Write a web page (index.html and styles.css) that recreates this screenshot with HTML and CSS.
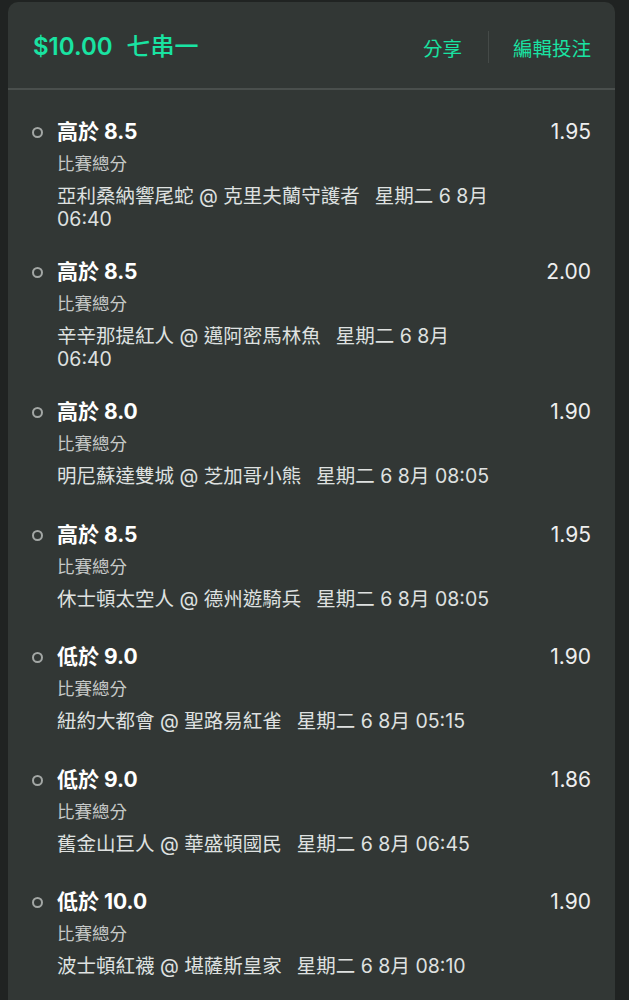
FILE: index.html
```html
<!DOCTYPE html>
<html>
<head>
    <meta charset="utf-8">
    <title>投注單</title>
    <link rel="stylesheet" href="styles.css">
</head>
<body>
<div class="slip">
    <div class="slip-header">
        <div class="slip-title">
            <span>$10.00</span>
            <span class="bet-type">七串一</span>
        </div>
        <div class="slip-actions">
            <a class="action" href="#">分享</a>
            <span class="sep"></span>
            <a class="action" href="#">編輯投注</a>
        </div>
    </div>

    <ul class="legs">
        <li class="leg">
            <span class="dot"></span>
            <div class="leg-info">
                <div class="pick">高於 8.5</div>
                <div class="market">比賽總分</div>
                <div class="match">亞利桑納響尾蛇 @ 克里夫蘭守護者<span class="when">星期二 6 8月<br>06:40</span></div>
            </div>
            <div class="odds">1.95</div>
        </li>
        <li class="leg">
            <span class="dot"></span>
            <div class="leg-info">
                <div class="pick">高於 8.5</div>
                <div class="market">比賽總分</div>
                <div class="match">辛辛那提紅人 @ 邁阿密馬林魚<span class="when">星期二 6 8月<br>06:40</span></div>
            </div>
            <div class="odds">2.00</div>
        </li>
        <li class="leg">
            <span class="dot"></span>
            <div class="leg-info">
                <div class="pick">高於 8.0</div>
                <div class="market">比賽總分</div>
                <div class="match">明尼蘇達雙城 @ 芝加哥小熊<span class="when">星期二 6 8月 08:05</span></div>
            </div>
            <div class="odds">1.90</div>
        </li>
        <li class="leg">
            <span class="dot"></span>
            <div class="leg-info">
                <div class="pick">高於 8.5</div>
                <div class="market">比賽總分</div>
                <div class="match">休士頓太空人 @ 德州遊騎兵<span class="when">星期二 6 8月 08:05</span></div>
            </div>
            <div class="odds">1.95</div>
        </li>
        <li class="leg">
            <span class="dot"></span>
            <div class="leg-info">
                <div class="pick">低於 9.0</div>
                <div class="market">比賽總分</div>
                <div class="match">紐約大都會 @ 聖路易紅雀<span class="when">星期二 6 8月 05:15</span></div>
            </div>
            <div class="odds">1.90</div>
        </li>
        <li class="leg">
            <span class="dot"></span>
            <div class="leg-info">
                <div class="pick">低於 9.0</div>
                <div class="market">比賽總分</div>
                <div class="match">舊金山巨人 @ 華盛頓國民<span class="when">星期二 6 8月 06:45</span></div>
            </div>
            <div class="odds">1.86</div>
        </li>
        <li class="leg">
            <span class="dot"></span>
            <div class="leg-info">
                <div class="pick">低於 10.0</div>
                <div class="market">比賽總分</div>
                <div class="match">波士頓紅襪 @ 堪薩斯皇家<span class="when">星期二 6 8月 08:10</span></div>
            </div>
            <div class="odds">1.90</div>
        </li>
    </ul>
</div>
</body>
</html>
```

FILE: styles.css
```css
* {
	box-sizing: border-box;
}

body {
	margin: 0;
	background-color: #202322;
	font-family: Inter, "Noto Sans CJK TC", sans-serif;
	color: #e2e4e3;
}

.slip {
	margin: 2px 14px 0 8px;
	min-height: 1000px;
	background-color: #323735;
	border-radius: 10px 10px 0 0;
}

/* header */

.slip-header {
	display: flex;
	align-items: center;
	justify-content: space-between;
	height: 88px;
	padding: 4px 24px 0 25px;
	border-bottom: 2px solid #4a4f4d;
}

.slip-title {
	display: flex;
	align-items: baseline;
	gap: 14px;
	font-size: 24px;
	line-height: 30px;
	font-weight: 600;
	color: #19e3a2;
}

.bet-type {
	font-weight: 500;
}

.slip-actions {
	display: flex;
	align-items: center;
}

.action {
	font-size: 19.5px;
	color: #19e3a2;
	text-decoration: none;
}

.sep {
	width: 1px;
	height: 32px;
	margin: 0 24px 0 26px;
	background-color: #454a48;
}

/* legs */

.legs {
	list-style: none;
	margin: 0;
	padding: 15px 0 0 0;
}

.leg {
	display: flex;
	align-items: flex-start;
	min-height: 122.5px;
	padding: 14px 24px 14px 24px;
}

.dot {
	flex: none;
	width: 11px;
	height: 11px;
	margin: 8px 14px 0 0;
	border: 2px solid #a3a7a5;
	border-radius: 50%;
}

.leg-info {
	flex: 1;
}

.pick {
	font-size: 21px;
	line-height: 26px;
	font-weight: 700;
	color: #ffffff;
}

.market {
	margin-top: 8px;
	font-size: 17.5px;
	line-height: 22px;
	color: #c6c9c8;
}

.match {
	margin-top: 10px;
	font-size: 19.5px;
	line-height: 23px;
	color: #dfe1e0;
	white-space: nowrap;
}

.when {
	margin-left: 15px;
}

.odds {
	font-size: 21px;
	line-height: 26px;
	color: #eeeeee;
}
```
